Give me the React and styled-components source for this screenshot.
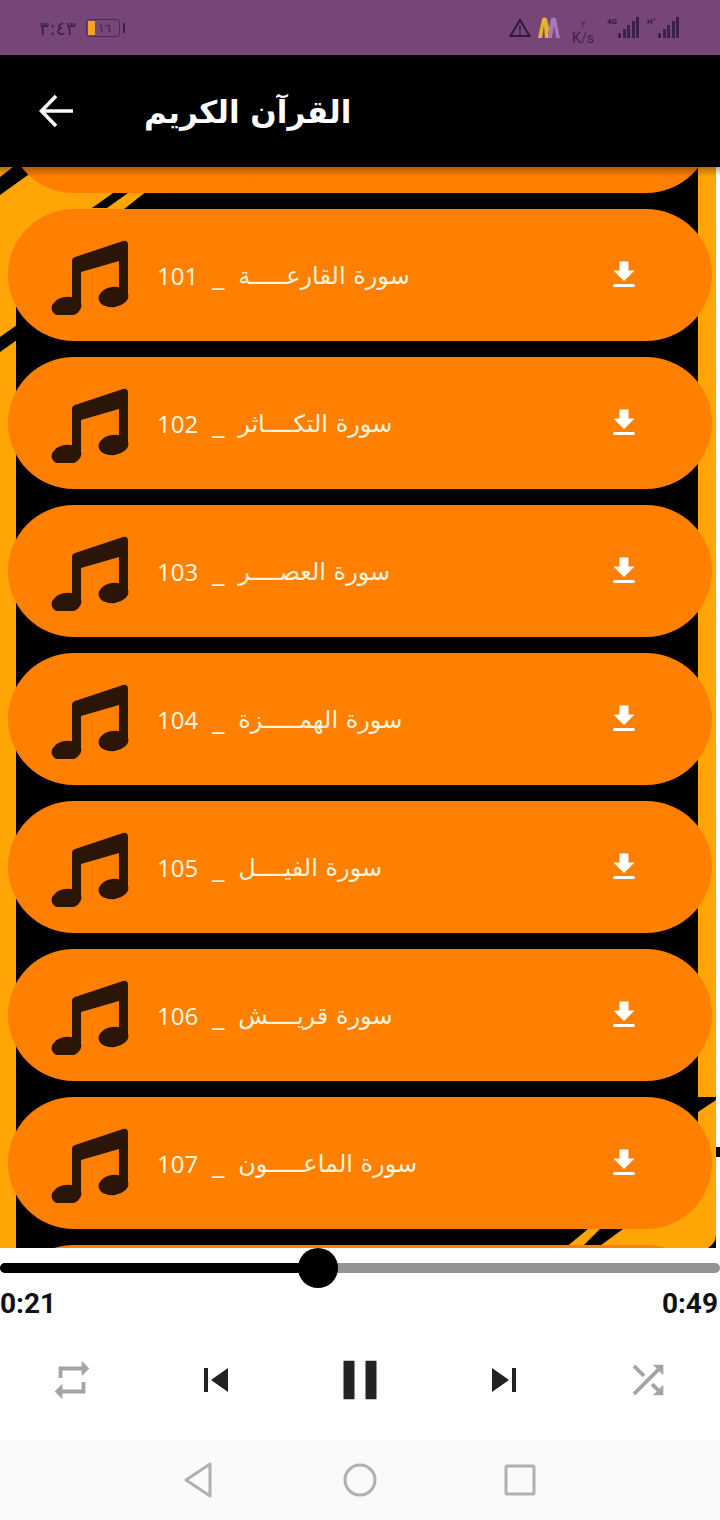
import React from 'react';
import styled, { createGlobalStyle } from 'styled-components';
import { MdFileDownload, MdSkipPrevious, MdSkipNext, MdPause, MdRepeat, MdShuffle } from 'react-icons/md';

const GlobalStyle = createGlobalStyle`
  html, body { margin: 0; padding: 0; background: #fff; }
  body { font-family: "DejaVu Sans", "Noto Sans", sans-serif; }
`;

const Screen = styled.div`
  width: 720px;
  height: 1520px;
  display: flex;
  flex-direction: column;
  overflow: hidden;
`;

const StatusBar = styled.div`
  height: 55px;
  flex: none;
  background: #784578;
  color: #2f1c3c;
  display: flex;
  align-items: center;
  justify-content: space-between;
  padding: 0 41px 0 39px;
  box-sizing: border-box;
`;

const StatusGroup = styled.div`
  display: flex;
  align-items: center;
  gap: ${p => p.$gap || 0}px;
`;

const Clock = styled.span`
  font-size: 19px;
  line-height: 24px;
  letter-spacing: 1px;
  color: #3a2148;
  font-family: "DejaVu Sans", sans-serif;
`;

const Battery = styled.div`
  width: 34px;
  height: 18px;
  border: 1.5px solid #4a2a58;
  border-radius: 3px;
  box-sizing: border-box;
  display: flex;
  align-items: center;
  position: relative;
  &::before {
    content: '';
    width: 7px;
    height: 14px;
    background: #f7a12c;
    margin-left: 1px;
  }
  &::after {
    content: '';
    position: absolute;
    right: -6px;
    top: 3px;
    width: 2px;
    height: 10px;
    background: #3a2148;
  }
`;

const BatteryText = styled.span`
  font-size: 12px;
  line-height: 14px;
  margin-left: 3px;
  color: #3a2148;
  font-family: "DejaVu Sans", sans-serif;
`;

const Speed = styled.div`
  width: 24px;
  display: flex;
  flex-direction: column;
  align-items: center;
  font-family: Roboto, sans-serif;
  font-size: 14px;
  line-height: 14px;
  margin: 6px 12px 0 10px;
  color: #3a2148;
  span { font-size: 9px; line-height: 14px; }
`;

const Signal = styled.div`
  display: flex;
  align-items: flex-end;
  position: relative;
  height: 21px;
  margin-left: ${p => p.$offset}px;
  gap: 1.5px;
  i {
    display: block;
    width: 3px;
    background: #3a2148;
  }
  b {
    position: absolute;
    left: -11px;
    top: 0;
    font: 700 8px/9px Roboto, sans-serif;
    color: #2f1c3c;
  }
`;

const Header = styled.div`
  height: 112px;
  flex: none;
  background: #000;
  display: flex;
  align-items: center;
  color: #fff;
  padding-left: 38px;
`;

const BackIcon = styled.svg`
  width: 38px;
  height: 38px;
  flex: none;
  fill: none;
  stroke: #fff;
  stroke-width: 3.6;
`;

const Title = styled.h1`
  margin: 2px 0 0 68px;
  font-size: 31px;
  font-weight: 700;
  line-height: 44px;
  direction: rtl;
`;

const ListArea = styled.div`
  flex: none;
  height: 1081px;
  position: relative;
  overflow: hidden;
  background: #000;
`;

const Backdrop = styled.svg`
  position: absolute;
  inset: 0;
  width: 720px;
  height: 1081px;
`;

const HeaderShade = styled.div`
  position: absolute;
  left: 0;
  right: 0;
  top: 0;
  height: 10px;
  background: linear-gradient(rgba(0, 0, 0, 0.3), rgba(0, 0, 0, 0));
  z-index: 1;
`;

const List = styled.div`
  position: relative;
  display: flex;
  flex-direction: column;
  gap: 16px;
  padding: 0 8px;
  margin-top: -106px;
`;

const Card = styled.div`
  height: 132px;
  flex: none;
  border-radius: 66px;
  background: #ff8000;
  display: flex;
  align-items: center;
  padding: 0 70px 0 42px;
`;

const NoteIcon = styled.svg`
  width: 80px;
  height: 80px;
  flex: none;
  fill: #2a1506;
`;

const TrackName = styled.div`
  margin: 2px 0 0 27px;
  flex: 1;
  color: #fff3dc;
  font-size: 24px;
  line-height: 30px;
  white-space: pre;
  display: flex;
  gap: 14px;
`;

const TrackNumber = styled.span`
  font-family: "Noto Sans", sans-serif;
`;

const Download = styled(MdFileDownload)`
  width: 36px;
  height: 36px;
  color: #fff;
  flex: none;
  margin-top: -1px;
`;

const Player = styled.div`
  flex: none;
  height: 192px;
  background: #fff;
  position: relative;
`;

const Track = styled.div`
  position: absolute;
  left: 0;
  right: 0;
  top: 15px;
  height: 10px;
  border-radius: 5px;
  background: #949494;
`;

const TrackFill = styled.div`
  height: 100%;
  border-radius: 5px;
  background: #000;
`;

const Thumb = styled.div`
  position: absolute;
  top: -15px;
  width: 40px;
  height: 40px;
  border-radius: 50%;
  background: #000;
  margin-left: -20px;
`;

const Times = styled.div`
  display: flex;
  justify-content: space-between;
  padding: 40px 2px 0 0;
  font: 700 28px/32px Roboto, sans-serif;
  color: #111;
`;

const Controls = styled.div`
  display: grid;
  grid-template-columns: repeat(5, 144px);
  margin-top: 27px;
  justify-items: center;
  align-items: center;
  height: 66px;
`;

const NavBar = styled.div`
  flex: 1;
  background: #fafafa;
  display: flex;
  justify-content: center;
  align-items: center;
  gap: 116px;
`;

const NavIcon = styled.svg`
  width: 44px;
  height: 44px;
  fill: none;
  stroke: #b0b0b0;
  stroke-width: 3;
  stroke-linejoin: round;
`;

const tracks = [
  ['100', 'سورة البينة'],
  ['101', 'سورة القارعـــــة'],
  ['102', 'سورة التكــــاثر'],
  ['103', 'سورة العصــــر'],
  ['104', 'سورة الهمـــــزة'],
  ['105', 'سورة الفيــــل'],
  ['106', 'سورة قريــــش'],
  ['107', 'سورة الماعـــــون'],
  ['108', 'سورة الكوثر'],
];

const bars = [5, 9, 13, 17, 21];

const SignalBars = ({ label, offset }) => (
  <Signal $offset={offset}>
    <b>{label}</b>
    {bars.map(h => <i key={h} style={{ height: h }} />)}
  </Signal>
);

export default function App() {
  return (
    <Screen>
      <GlobalStyle />
      <StatusBar>
        <StatusGroup $gap={10}>
          <Clock>٣:٤٣</Clock>
          <Battery><BatteryText>١٦</BatteryText></Battery>
        </StatusGroup>
        <StatusGroup>
          <svg width="22" height="20" viewBox="0 0 22 20" fill="none" stroke="#2f1c3c" strokeWidth="2">
            <path d="M11 2 L20.5 18 H1.5 Z" />
            <path d="M11 7.5V13M11 14.5V16.5" strokeWidth="1.6" />
          </svg>
          <svg width="24" height="24" viewBox="0 0 24 24" style={{ marginLeft: 6 }}>
            <path d="M1 22 L5 3 C6 1 9 1 10 3 L12 12 L11 22 H8 L7 9 L5 22 Z" fill="#eab32e" />
            <path d="M11 22 L12 12 L14 3 C15 1 18 1 19 3 L23 22 H19 L17 9 L15 22 Z" fill="#a878b8" />
          </svg>
          <Speed><span>٢</span>K/s</Speed>
          <SignalBars label="4G" offset={11} />
          <SignalBars label="H⁺" offset={19} />
        </StatusGroup>
      </StatusBar>
      <Header>
        <BackIcon viewBox="0 0 38 38">
          <path d="M35 19 H5 M18 4 L3.500 19 L18 34" />
        </BackIcon>
        <Title>القرآن الكريم</Title>
      </Header>
      <ListArea>
        <Backdrop viewBox="0 0 720 1081">
          <rect x="716" width="4" height="1081" fill="#fff" />
          <rect x="716" y="980" width="4" height="10" fill="#000" />
          <rect x="0" width="16" height="1081" fill="#ffa505" />
          <rect x="698" width="18" height="930" fill="#ffa505" />
          <path d="M0 0 H177 L0 141 Z" fill="#ffa505" />
          <path d="M0 10 L13 0 H39 L0 28 Z" fill="#000" />
          <path d="M92 41 L113 26 H128 L107 41 Z" fill="#000" />
          <path d="M0 170 L17 158 V173 L0 185 Z" fill="#000" />
          <path d="M565 1081 L588 1062 H600 L581 1081 Z" fill="#ffa505" />
          <path d="M597 1081 L623 1062 L698 1005 V945 L716 933 V1068 Q716 1076 708 1081 Z" fill="#ffa505" />
        </Backdrop>
        <HeaderShade />
        <List>
          {tracks.map(([num, name]) => (
            <Card key={num}>
              <NoteIcon viewBox="50 235 80 80">
                <path d="M72 261 Q72 258 75 257 L123 241 Q128 240 128 245 V295 H119 V261 L81 272 V304 H72 Z" />
                <ellipse cx="66.5" cy="307" rx="15" ry="10" transform="rotate(-8 66.5 307)" />
                <ellipse cx="113.5" cy="297" rx="15" ry="10" transform="rotate(-8 113.5 297)" />
              </NoteIcon>
              <TrackName>
                <TrackNumber>{num}</TrackNumber>
                <span>_</span>
                <span dir="rtl">{name}</span>
              </TrackName>
              <Download />
            </Card>
          ))}
        </List>
      </ListArea>
      <Player>
        <Track>
          <TrackFill style={{ width: '44.2%' }} />
          <Thumb style={{ left: '44.2%' }} />
        </Track>
        <Times><span>0:21</span><span>0:49</span></Times>
        <Controls>
          <MdRepeat size={46} color="#a4a4a4" />
          <MdSkipPrevious size={48} color="#212121" />
          <MdPause size={66} color="#212121" />
          <MdSkipNext size={48} color="#212121" />
          <MdShuffle size={46} color="#a4a4a4" />
        </Controls>
      </Player>
      <NavBar>
        <NavIcon viewBox="0 0 44 44"><path d="M32 6 V38 L8 22 Z" /></NavIcon>
        <NavIcon viewBox="0 0 44 44"><circle cx="22" cy="22" r="15" /></NavIcon>
        <NavIcon viewBox="0 0 44 44"><rect x="8" y="8" width="28" height="28" rx="1" /></NavIcon>
      </NavBar>
    </Screen>
  );
}
